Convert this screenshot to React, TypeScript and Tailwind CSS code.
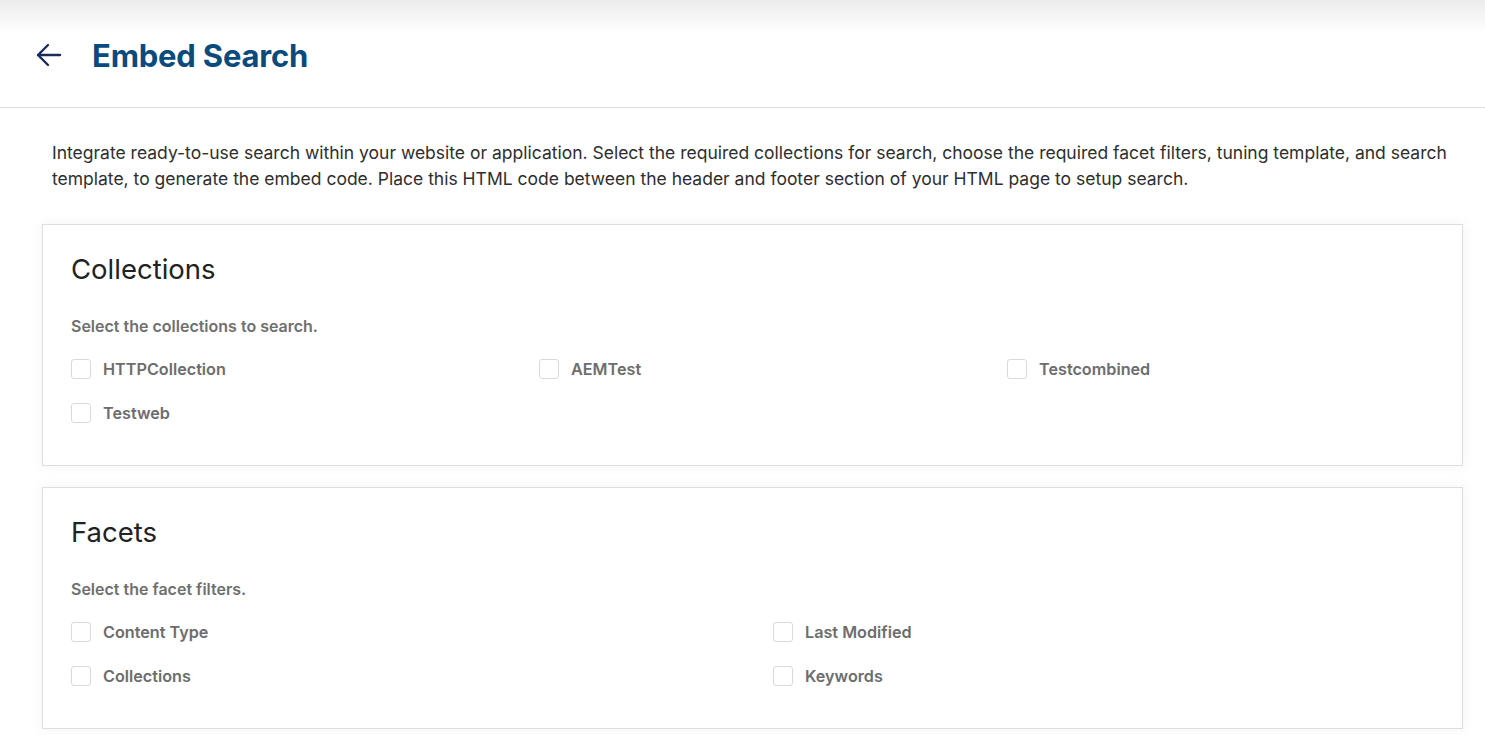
const collections = ['HTTPCollection', 'AEMTest', 'Testcombined', 'Testweb'];
const facets = ['Content Type', 'Last Modified', 'Collections', 'Keywords'];

const CheckRow = ({ label }: { label: string }) => (
  <label className="flex h-6 items-center gap-3">
    <span className="h-5 w-5 shrink-0 rounded-[3px] border border-[#dadada] bg-white" />
    <span className="text-[16.2px] font-semibold text-[#6d6d6d]">{label}</span>
  </label>
);

const Card = ({
  title,
  hint,
  items,
  cols,
}: {
  title: string;
  hint: string;
  items: string[];
  cols: string;
}) => (
  <section className="border border-[#dedede] bg-white px-[28px] pt-[27px] pb-[40px] shadow-[0_0_14px_rgba(0,0,0,0.05)]">
    <h2 className="text-[27.5px] leading-[34px] font-normal text-[#222]">{title}</h2>
    <p className="mt-[30px] text-[16px] leading-5 font-semibold text-[#6f6f6f]">{hint}</p>
    <div className={`mt-[21px] grid gap-y-5 ${cols}`}>
      {items.map((item) => (
        <CheckRow key={item} label={item} />
      ))}
    </div>
  </section>
);

export default function App() {
  return (
    <div className="min-h-screen bg-white font-['Inter','Noto_Sans',sans-serif]">
      <header className="flex h-[108px] items-center border-b border-[#dcdcdc] bg-[linear-gradient(to_bottom,#ececec_0px,#ffffff_34px)] pl-[36px]">
        <svg width="26" height="26" viewBox="0 0 26 26" fill="none" className="mt-[3px]">
          <path
            d="M24 13H2M12 3L2 13l10 10"
            stroke="#1b2c5c"
            strokeWidth="2.4"
            strokeLinecap="round"
            strokeLinejoin="round"
          />
        </svg>
        <h1 className="mt-[5px] ml-[30px] text-[31px] font-bold tracking-[-0.2px] text-[#0b4a7d]">Embed Search</h1>
      </header>

      <main className="ml-[42px] mr-[22px] pb-6">
        <p className="mt-[32px] pl-[10px] text-[17.5px] leading-[26px] text-[#2e2e2e]">
          Integrate ready-to-use search within your website or application. Select the required collections for
          search, choose the required facet filters, tuning template, and search template, to generate the embed
          code. Place this HTML code between the header and footer section of your HTML page to setup search.
        </p>

        <div className="mt-[32px] flex flex-col gap-[21px]">
          <Card
            title="Collections"
            hint="Select the collections to search."
            items={collections}
            cols="grid-cols-[468px_468px_468px]"
          />
          <Card title="Facets" hint="Select the facet filters." items={facets} cols="grid-cols-[702px_702px]" />
        </div>
      </main>
    </div>
  );
}
